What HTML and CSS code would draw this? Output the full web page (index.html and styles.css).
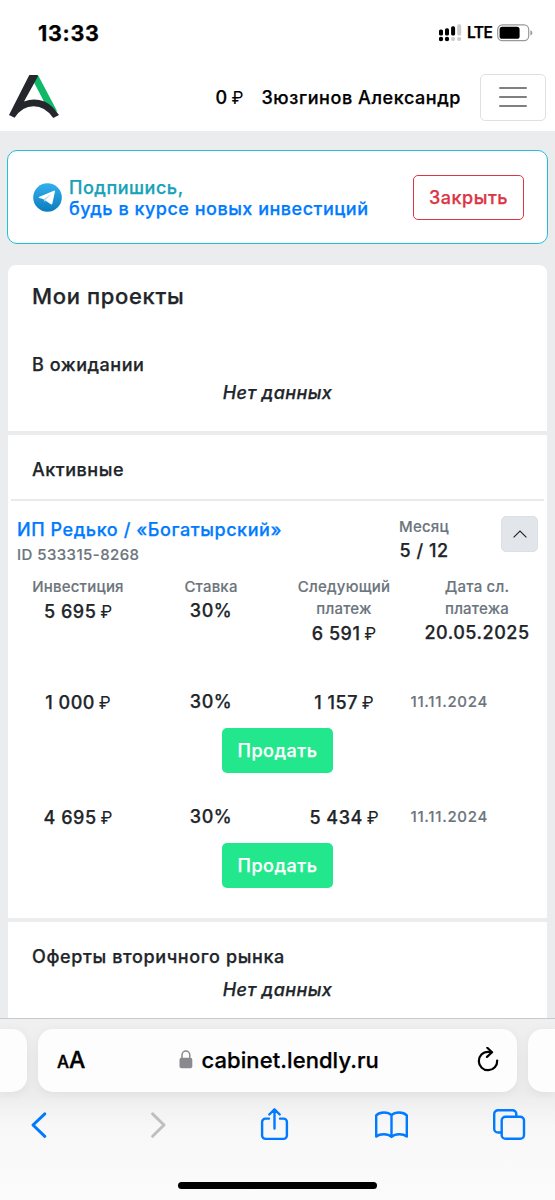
FILE: index.html
```
<!DOCTYPE html>
<html lang="ru">
<head>
<meta charset="utf-8">
<title>Lendly</title>
<link rel="stylesheet" href="styles.css">
</head>
<body>
<div class="screen">
  <header class="top">
    <div class="status">
      <span class="clock">13:33</span>
      <div class="status-icons">
        <svg class="signal" width="23" height="18" viewBox="0 0 23 18">
          <g fill="#000"><rect x="0" y="5.5" width="4" height="6" rx="1.6"/><rect x="6" y="4.3" width="4" height="7.2" rx="1.6"/><rect x="12.1" y="2.3" width="4" height="9.2" rx="1.6"/><circle cx="2" cy="15" r="2.2"/><circle cx="8" cy="15" r="2.2"/></g>
          <g fill="#ccc"><rect x="18.2" y="0.3" width="4" height="11.2" rx="1.6"/><circle cx="14.1" cy="15" r="2.1"/><circle cx="20.2" cy="15" r="2.1"/></g>
        </svg>
        <span class="lte">LTE</span>
        <svg class="battery" width="37" height="18" viewBox="0 0 37 18">
          <rect x="0.7" y="0.9" width="31" height="15.8" rx="4.6" fill="none" stroke="#999" stroke-width="1.2"/>
          <rect x="2.6" y="2.8" width="20" height="12" rx="2.6" fill="#000"/>
          <path d="M33.4 6.2q2 .9 2 2.7t-2 2.7z" fill="#999"/>
        </svg>
      </div>
    </div>
    <div class="navbar">
      <svg class="logo" width="50" height="44" viewBox="0 0 50 44">
        <path d="M27 0H29L48.500 37 36 28.500 25 7.500z" fill="#10b868"/>
        <path d="M20.300 0H28L29 1.300 15 26.500Q25 22.500 35.500 26.500 43 30 50 40L44.300 43Q36 31.300 24.700 31.300 13 31.300 5.600 42.800L0 40z" fill="#25272c"/>
      </svg>
      <span class="balance">0 <span class="rub">₽</span></span>
      <span class="user">Зюзгинов Александр</span>
      <div class="toggler"><i></i><i></i><i></i></div>
    </div>
  </header>

  <main class="content">
    <section class="alert">
      <svg class="telegram" width="29" height="29" viewBox="0 0 29 29">
        <defs><linearGradient id="tg" x1="0" y1="0" x2="0" y2="1"><stop offset="0" stop-color="#34b0ee"/><stop offset="1" stop-color="#0a7cbd"/></linearGradient></defs>
        <circle cx="14.500" cy="14.500" r="14.300" fill="url(#tg)"/>
        <path d="M5.800 14 20.800 7.700q1.300-.4 1.100 1.100L19.400 20.600q-.4 1.400-1.600.7L10.600 16.200 6 14.700q-.8-.3-.2-.7z" fill="#fff"/>
        <path d="M10.600 16.200 18.600 10.700 12.600 16.700 12.100 19.500z" fill="#b5d5ea"/>
      </svg>
      <p class="alert-text"><span class="teal">Подпишись,</span><a class="blue">будь в курсе новых инвестиций</a></p>
      <button class="close">Закрыть</button>
    </section>

    <section class="card card-first">
      <h1>Мои проекты</h1>
      <h2 class="waiting">В ожидании</h2>
      <p class="empty">Нет данных</p>
    </section>

    <section class="card card-active">
      <h2>Активные</h2>
      <div class="project">
        <div class="project-head">
          <div class="project-name"><a>ИП Редько / «Богатырский»</a><small class="id">ID 533315-8268</small></div>
          <div class="month"><small>Месяц</small><b>5 / 12</b></div>
          <button class="collapse"><svg width="14" height="8" viewBox="0 0 14 8"><path d="M.6 7.400 7 1l6.400 6.400" fill="none" stroke="#212529" stroke-width="1.150"/></svg></button>
        </div>
        <div class="cols summary">
          <div><small>Инвестиция</small><b class="money">5 695 <span class="rub">₽</span></b></div>
          <div><small>Ставка</small><b>30%</b></div>
          <div><small>Следующий<br>платеж</small><b class="money">6 591 <span class="rub">₽</span></b></div>
          <div><small>Дата сл.<br>платежа</small><b class="due">20.05.2025</b></div>
        </div>
        <div class="lot">
          <div class="cols">
            <b class="money">1 000 <span class="rub">₽</span></b><b>30%</b><b class="money">1 157 <span class="rub">₽</span></b><small class="date">11.11.2024</small>
          </div>
          <button class="sell">Продать</button>
        </div>
        <div class="lot">
          <div class="cols">
            <b class="money">4 695 <span class="rub">₽</span></b><b>30%</b><b class="money">5 434 <span class="rub">₽</span></b><small class="date">11.11.2024</small>
          </div>
          <button class="sell">Продать</button>
        </div>
      </div>
    </section>

    <section class="card card-offers">
      <h2 class="offers">Оферты вторичного рынка</h2>
      <p class="empty">Нет данных</p>
    </section>
  </main>

  <footer class="safari">
    <div class="tabs">
      <div class="pill pill-prev"></div>
      <div class="pill pill-main">
        <span class="aa"><span>A</span>A</span>
        <div class="url">
          <svg width="14" height="19" viewBox="0 0 14 19"><rect x="0.500" y="7.700" width="12.800" height="10.600" rx="2" fill="#8a8a8e"/><path d="M3 8.500V5.200a3.900 4.200 0 0 1 7.800 0v3.300" fill="none" stroke="#8a8a8e" stroke-width="1.500"/></svg>
          <span>cabinet.lendly.ru</span>
        </div>
        <svg class="reload" width="22" height="26" viewBox="0 0 22 26" fill="none" stroke="#000" stroke-width="2.200" stroke-linecap="round" stroke-linejoin="round"><path d="M14.700 5.200Q13 4.800 11 4.800A9.200 9.200 0 1 0 20.200 13.500"/><path d="M10.300 .8 15 5.200 10 9.900"/></svg>
      </div>
      <div class="pill pill-next"></div>
    </div>
    <nav class="tools">
      <svg width="33" height="34" viewBox="0 0 33 34" fill="none" stroke="#007aff" stroke-width="3" stroke-linecap="round" stroke-linejoin="round"><path d="M22.800 5.900 11 17l11.800 11.300"/></svg>
      <svg width="33" height="34" viewBox="0 0 33 34" fill="none" stroke="#bfbfbf" stroke-width="3" stroke-linecap="round" stroke-linejoin="round"><path d="M13.600 5.900 25 17 13.600 28.300"/></svg>
      <svg width="33" height="34" viewBox="0 0 33 34" fill="none" stroke="#007aff" stroke-width="2.400" stroke-linecap="round" stroke-linejoin="round"><path d="M12 10.600H8.500a3.400 3.400 0 0 0-3.400 3.400v13.500a3.400 3.400 0 0 0 3.400 3.400h18a3.400 3.400 0 0 0 3.400-3.400V14a3.400 3.400 0 0 0-3.400-3.400H23M17.500 20.500V1.500M12.300 6.500 17.500 1.300 22.700 6.500"/></svg>
      <svg width="35" height="34" viewBox="0 0 35 34" fill="none" stroke="#007aff" stroke-width="2.400" stroke-linecap="round" stroke-linejoin="round"><path d="M17.500 7.200C14 3.600 6 3.400 2.200 7.300V28.500c4-3 11.500-3 15.300.4 3.800-3.400 11.300-3.400 15.300-.4v-21.200C29 3.400 21 3.600 17.500 7.200zV28.500"/></svg>
      <svg width="33" height="34" viewBox="0 0 33 34" fill="none" stroke="#007aff" stroke-width="2.400" stroke-linejoin="round"><rect x="8.700" y="8.800" width="22.300" height="22" rx="3.800"/><path d="M9 24.500H5A3.800 3.800 0 0 1 1.200 20.700V6A3.800 3.800 0 0 1 5 2.200H19.500A3.800 3.800 0 0 1 23.300 6V8.500"/></svg>
    </nav>
    <div class="home"></div>
  </footer>
</div>
</body>
</html>
```
FILE: styles.css
```
* { box-sizing: border-box; margin: 0; padding: 0; }
body { background: #ebecee; font-family: Inter, "Liberation Sans", sans-serif; font-weight: 500; font-size: 18px; color: #212529; -webkit-text-stroke: 0.250px currentColor; }
button { font: inherit; letter-spacing: inherit; display: block; }
svg { display: block; flex: none; }
.screen { width: 555px; height: 1200px; overflow: hidden; display: flex; flex-direction: column; letter-spacing: 0.530px; }

.top { height: 131px; background: #fff; flex: none; color: #000; }
.status { height: 66px; padding: 0 21px 0 38px; display: flex; justify-content: space-between; align-items: center; }
.clock { font-size: 21.500px; font-weight: 700; letter-spacing: 0.700px; }
.status-icons { display: flex; align-items: center; }
.signal { margin-right: 5.500px; }
.lte { font-size: 15.500px; font-weight: 600; letter-spacing: -0.500px; width: 30px; line-height: 20px; }
.navbar { height: 62px; padding: 0 9.500px 0 9px; display: flex; align-items: center; }
.logo { margin-right: 156.500px; }
.balance { width: 46px; white-space: nowrap; }
.user { width: 218.500px; white-space: nowrap; letter-spacing: 0.580px; padding-top: 1px; }
.balance { padding-top: 1px; }
.rub { font-weight: 400; font-size: 17px; letter-spacing: 0; margin-left: -1.500px; -webkit-text-stroke: 0; }
.toggler { width: 65.500px; height: 47px; border: 1.500px solid #e0e0e0; border-radius: 5px; display: flex; flex-direction: column; justify-content: center; align-items: center; gap: 7px; }
.toggler i { width: 28px; height: 2px; border-radius: 1px; background: #808080; }

.content { height: 887px; flex: none; overflow: hidden; padding: 19px 8px 0; }
.alert { height: 94px; margin: 0 -1px 20.500px; background: #fff; border: 1.500px solid #22bfd8; border-radius: 10px; padding: 0 23px 0 25px; display: flex; align-items: center; }
.telegram { margin-right: 7px; }
.alert-text { flex: 1; display: flex; flex-direction: column; line-height: 21px; padding-top: 1px; }
.teal { color: #17a2b8; }
.blue { color: #007bff; letter-spacing: 0.500px; }
.close { width: 111px; height: 45px; border: 1.500px solid #dc3545; border-radius: 5px; background: #fff; color: #dc3545; }

.card { background: #fff; overflow: hidden; margin-bottom: 4.500px; }
.card h1 { font-size: 22px; font-weight: 500; line-height: 30px; padding-left: 24px; letter-spacing: 0.650px; }
.card h2 { font-size: 18px; font-weight: 500; line-height: 24px; padding-left: 24px; }
.empty { text-align: center; font-style: italic; line-height: 24px; letter-spacing: 0.400px; }
.card-first { height: 166px; border-radius: 8px 8px 0 0; padding-top: 16px; }
.card-first .waiting { margin: 42px 0 4px; }
.card-active { height: 482.500px; padding-top: 23px; }
.project { margin: 17px 3px 0; border-top: 2px solid #e9eaec; }
.project-head { height: 66px; padding: 15px 6px 0; display: flex; }
.project-name { flex: 1; display: flex; flex-direction: column; line-height: 28px; color: #007bff; letter-spacing: 0.580px; }
.project-name small { line-height: 22px; }
small { font-size: 15px; color: #6c757d; line-height: 22px; letter-spacing: 0.200px; -webkit-text-stroke: 0.150px currentColor; }
small.id { letter-spacing: 0.430px; }
b { font-weight: 500; display: block; line-height: 24px; white-space: nowrap; }
.month { width: 50px; margin-right: 52px; display: flex; flex-direction: column; align-items: center; }
.month b { line-height: 26px; }
.collapse { width: 37px; height: 36px; border: 1px solid #dae0e5; border-radius: 5px; background: #e2e6ea; display: flex; align-items: center; justify-content: center; }
.cols { display: grid; grid-template-columns: repeat(4, 133px); text-align: center; padding-left: 0.500px; }
.cols small { display: block; }
.cols .money { line-height: 26px; }
.summary { height: 115px; padding-top: 9px; }
.summary b { padding-top: 1px; }
.lot { height: 115px; padding-top: 8px; }
.lot .cols { height: 38px; align-items: start; }
.cols .date { text-align: left; line-height: 24px; letter-spacing: 0.700px; }
.sell { width: 111px; height: 45px; border: 0; border-radius: 5px; background: #22e78d; color: #fff; margin: 0 auto; }
.card-offers { height: 120px; padding-top: 23px; }
.offers { margin-bottom: 9px; }
.card h2.offers { letter-spacing: 0.620px; }

.safari { height: 182px; flex: none; border-top: 1px solid #c9c9cb; background: linear-gradient(#f0f0f1, #ececed 40%, #f8f8f8 60%, #fbfbfb); padding-top: 10px; letter-spacing: 0; color: #000; }
.tabs { display: flex; gap: 11px; height: 63px; }
.pill { background: #fdfdfd; border-radius: 15px; box-shadow: 0 2px 12px rgba(0,0,0,.06); }
.pill-prev { width: 27px; border-radius: 0 15px 15px 0; }
.pill-main { width: 479px; display: flex; align-items: center; padding: 0 18px 2px 19px; }
.pill-next { flex: 1; border-radius: 15px 0 0 15px; }
.aa { font-size: 23px; width: 121.500px; letter-spacing: 0; white-space: nowrap; -webkit-text-stroke: 0.400px currentColor; }
.aa span { font-size: 17px; }
.url { display: flex; align-items: center; gap: 9px; flex: 1; font-size: 22px; letter-spacing: 0.080px; }
.tools { height: 34px; margin-top: 16px; padding: 0 29px 0 22px; display: flex; justify-content: space-between; }
.home { width: 199px; height: 7px; border-radius: 4px; background: #000; margin: 40px auto 0; }
```
